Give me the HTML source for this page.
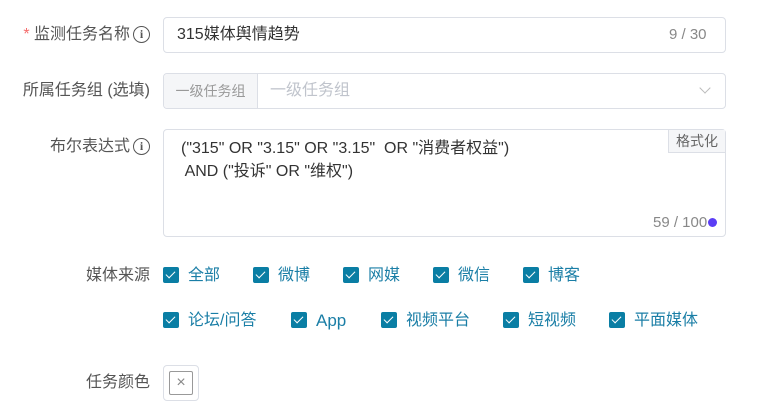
<!DOCTYPE html>
<html><head><meta charset="utf-8"><style>
*{box-sizing:border-box;margin:0;padding:0}
body{width:757px;height:418px;background:#fff;font-family:"Liberation Sans","Noto Sans CJK SC",sans-serif;font-size:16px;color:#333;position:relative;overflow:hidden}
.a{position:absolute;line-height:20px}
.lbl{position:absolute;right:607px;text-align:right;color:#555;white-space:nowrap;font-size:16px;line-height:20px}
.info{display:inline-block;width:17px;height:17px;border:1.6px solid #555;border-radius:50%;font-size:12px;line-height:14px;text-align:center;font-weight:bold;vertical-align:1px;margin-left:3px;font-family:"Liberation Serif",serif}
.box{position:absolute;border:1px solid #dcdfe6;border-radius:4px;background:#fff}
.cb{position:absolute;width:16px;height:16px;background:#0a7ea4;border-radius:2px}
.cb:after{content:"";position:absolute;left:5px;top:2px;width:4px;height:8px;border:solid #fff;border-width:0 1.5px 1.5px 0;transform:rotate(45deg)}
.ct{position:absolute;color:#1a7ea6;font-size:16px;line-height:20px}
</style></head><body>
<div class="lbl" style="top:25px"><span style="color:#f56c6c">*</span> 监测任务名称<span class="info">i</span></div>
<div class="box" style="left:163px;top:17px;width:563px;height:36px"></div>
<div class="a" style="left:177px;top:25px;color:#333">315媒体舆情趋势</div>
<div class="a" style="left:669px;top:25px;color:#888;font-size:15px">9 / 30</div>

<div class="lbl" style="top:81px">所属任务组 (选填)</div>
<div class="box" style="left:163px;top:73px;width:563px;height:36px"></div>
<div class="a" style="left:164px;top:74px;width:94px;height:34px;background:#f5f6f8;border-right:1px solid #dcdfe6;border-radius:4px 0 0 4px;color:#999;font-size:14px;line-height:34px;text-align:center">一级任务组</div>
<div class="a" style="left:270px;top:81px;color:#c0c4cc">一级任务组</div>
<div class="a" style="left:701px;top:84px;width:8px;height:8px;border-right:1px solid #bbb;border-bottom:1px solid #bbb;transform:rotate(45deg)"></div>

<div class="lbl" style="top:137px">布尔表达式<span class="info">i</span></div>
<div class="box" style="left:163px;top:129px;width:563px;height:108px"></div>
<div class="a" style="left:668px;top:130px;width:57px;height:23px;background:#f5f6f8;border-left:1px solid #dcdfe6;border-bottom:1px solid #dcdfe6;color:#666;font-size:14px;line-height:22px;text-align:center">格式化</div>
<div class="a" style="left:181px;top:137px;color:#333;white-space:pre;line-height:23px">("315" OR "3.15" OR "3.15"  OR "消费者权益")
 AND ("投诉" OR "维权")</div>
<div class="a" style="left:653px;top:213px;color:#888;font-size:15px">59 / 100</div>
<div class="a" style="left:708px;top:218px;width:9px;height:9px;border-radius:50%;background:#5b3df5"></div>

<div class="lbl" style="top:266px">媒体来源</div>
<div class="cb" style="left:163px;top:267px"></div><div class="ct" style="left:188px;top:266px">全部</div>
<div class="cb" style="left:253px;top:267px"></div><div class="ct" style="left:278px;top:266px">微博</div>
<div class="cb" style="left:343px;top:267px"></div><div class="ct" style="left:368px;top:266px">网媒</div>
<div class="cb" style="left:433px;top:267px"></div><div class="ct" style="left:458px;top:266px">微信</div>
<div class="cb" style="left:523px;top:267px"></div><div class="ct" style="left:548px;top:266px">博客</div>
<div class="cb" style="left:163px;top:312px"></div><div class="ct" style="left:188px;top:311px">论坛/问答</div>
<div class="cb" style="left:291px;top:312px"></div><div class="ct" style="left:316px;top:311px;font-size:17px">App</div>
<div class="cb" style="left:381px;top:312px"></div><div class="ct" style="left:406px;top:311px">视频平台</div>
<div class="cb" style="left:503px;top:312px"></div><div class="ct" style="left:528px;top:311px">短视频</div>
<div class="cb" style="left:609px;top:312px"></div><div class="ct" style="left:634px;top:311px">平面媒体</div>

<div class="lbl" style="top:373px">任务颜色</div>
<div class="box" style="left:163px;top:365px;width:36px;height:36px"></div>
<div class="a" style="left:169px;top:371px;width:24px;height:24px;border:1px solid #999;border-radius:2px;color:#888;font-size:16px;line-height:22px;text-align:center">×</div>
</body></html>
